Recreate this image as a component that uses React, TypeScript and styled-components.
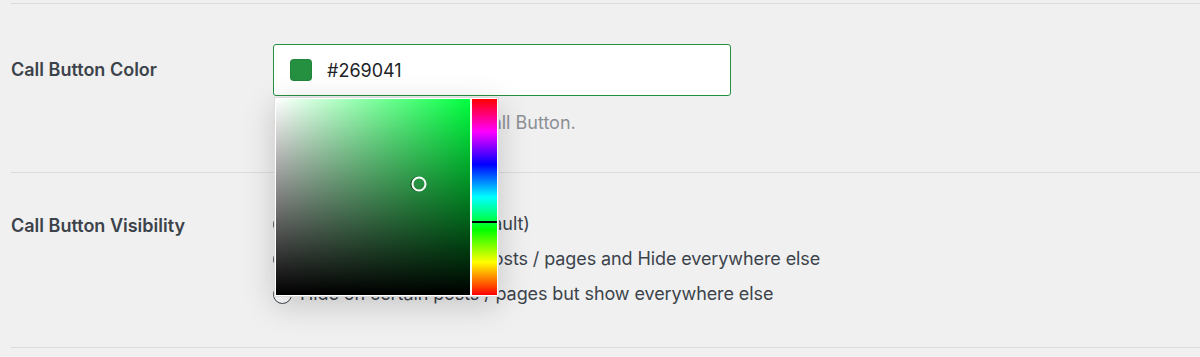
import React from "react";
import styled, { createGlobalStyle } from "styled-components";

const Global = createGlobalStyle`
  html, body { margin: 0; padding: 0; background: #f0f0f1; }
  body { font-family: Inter, "Noto Sans", "Liberation Sans", sans-serif; color: #3c434a; }
`;

const Page = styled.div`
  width: 1200px;
  height: 357px;
  overflow: hidden;
  padding-left: 11px;
  box-sizing: border-box;
  padding-top: 3px;
`;

const Row = styled.div<{ $top: number; $bottom: number }>`
  display: flex;
  border-top: 1px solid #dcdcde;
  padding-top: ${(p) => p.$top}px;
  padding-bottom: ${(p) => p.$bottom}px;
`;

const EndLine = styled.div`
  border-top: 1px solid #dcdcde;
`;

const Label = styled.div<{ $pt: number }>`
  width: 262px;
  flex: none;
  font-size: 18px;
  font-weight: 600;
  color: #3c434a;
  padding-top: ${(p) => p.$pt}px;
  line-height: 24px;
`;

const Field = styled.div`
  position: relative;
  display: flex;
  flex-direction: column;
`;

const ColorInput = styled.div`
  width: 458px;
  height: 52px;
  box-sizing: border-box;
  border: 1px solid #269041;
  border-radius: 3px;
  background: #fff;
  display: flex;
  align-items: center;
  padding-left: 16px;
  gap: 15px;
  font-size: 18px;
  color: #1d2327;
`;

const Swatch = styled.span<{ $color: string }>`
  width: 22px;
  height: 22px;
  border-radius: 4px;
  background: ${(p) => p.$color};
  box-shadow: inset 0 0 0 1px rgba(0, 0, 0, 0.08);
`;

const Description = styled.p`
  margin: 15px 0 0;
  font-size: 18px;
  line-height: 24px;
  color: #8c8f94;
`;

const Picker = styled.div`
  position: absolute;
  left: 1px;
  top: 53px;
  width: 225px;
  height: 200px;
  box-sizing: border-box;
  background: #fff;
  border: 1px solid #dcdcde;
  display: flex;
  gap: 2px;
  padding: 1px;
  box-shadow: 0 8px 30px rgba(0, 0, 0, 0.18);
`;

const Saturation = styled.div`
  position: relative;
  width: 196px;
  height: 196px;
  background: linear-gradient(to top, #000, rgba(0, 0, 0, 0)),
    linear-gradient(to right, #fff, hsl(135, 100%, 50%));
`;

const Handle = styled.span`
  position: absolute;
  width: 11px;
  height: 11px;
  border: 2px solid #fff;
  border-radius: 50%;
  box-shadow: -1px 0 0 0 rgba(0, 0, 0, 0.6);
  transform: translate(-50%, -50%);
`;

const Hue = styled.div`
  position: relative;
  width: 25px;
  height: 196px;
  background: linear-gradient(
    to bottom,
    #ff0000 0%,
    #ff00ff 16.66%,
    #0000ff 33.33%,
    #00ffff 50%,
    #00ff00 66.66%,
    #ffff00 83.33%,
    #ff0000 100%
  );
`;

const HueMarker = styled.span`
  position: absolute;
  left: 0;
  right: 0;
  height: 2px;
  background: #000;
`;

const RadioList = styled.div`
  display: flex;
  flex-direction: column;
  gap: 11px;
`;

const RadioRow = styled.label`
  display: flex;
  align-items: center;
  gap: 8px;
  font-size: 18px;
  line-height: 24px;
  color: #3c434a;
  letter-spacing: -0.1px;
`;

const RadioCircle = styled.span`
  width: 19px;
  height: 19px;
  box-sizing: border-box;
  border: 1.5px solid #3c434a;
  border-radius: 50%;
  background: #fff;
  flex: none;
`;

const options = [
  "Show everywhere (Default)",
  "Show only on certain posts / pages and Hide everywhere else",
  "Hide on certain posts / pages but show everywhere else",
];

export default function App() {
  const s = 0.736;
  const v = 0.565;
  const hue = 136;
  return (
    <>
      <Global />
      <Page>
        <Row $top={40} $bottom={37}>
          <Label $pt={14}>Call Button Color</Label>
          <Field>
            <ColorInput>
              <Swatch $color="#269041" />
              <span>#269041</span>
            </ColorInput>
            <Description>Choose a color for your Call Button.</Description>
            <Picker>
              <Saturation>
                <Handle style={{ left: `${s * 100}%`, top: `${(1 - v) * 100}%` }} />
              </Saturation>
              <Hue>
                <HueMarker style={{ top: `${((360 - hue) / 360) * 100}%` }} />
              </Hue>
            </Picker>
          </Field>
        </Row>
        <Row $top={39} $bottom={41}>
          <Label $pt={2}>Call Button Visibility</Label>
          <RadioList>
            {options.map((o) => (
              <RadioRow key={o}>
                <RadioCircle />
                {o}
              </RadioRow>
            ))}
          </RadioList>
        </Row>
        <EndLine />
      </Page>
    </>
  );
}
